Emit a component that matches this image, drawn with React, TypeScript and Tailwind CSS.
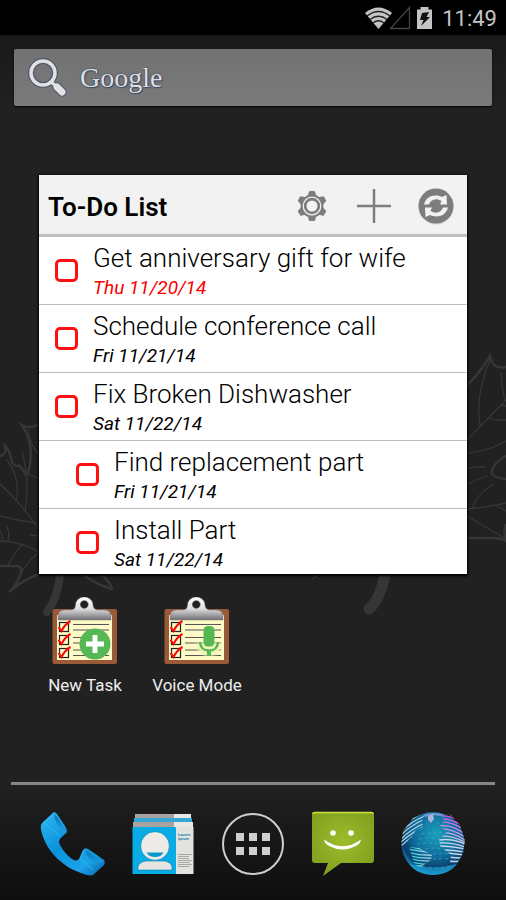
import React from "react";

type Task = { id: string; title: string; due: string; overdue?: boolean; child?: boolean };

const tasks: Task[] = [
  { id: "gift", title: "Get anniversary gift for wife", due: "Thu 11/20/14", overdue: true },
  { id: "call", title: "Schedule conference call", due: "Fri 11/21/14" },
  { id: "dish", title: "Fix Broken Dishwasher", due: "Sat 11/22/14" },
  { id: "part", title: "Find replacement part", due: "Fri 11/21/14", child: true },
  { id: "install", title: "Install Part", due: "Sat 11/22/14", child: true },
];

function Wallpaper() {
  return (
    <svg className="absolute inset-0 h-full w-full" viewBox="0 0 506 900" preserveAspectRatio="xMidYMid slice" fill="none" stroke="#363636" strokeLinecap="round" aria-hidden="true">
      <g strokeWidth="2.500">
        <path d="M40 423Q32 430 22 425Q36 447 28 473C26 477 24 471 20 466C17 465 15 468 12 462C10 456 11 452 5 446Q7 455 0 456" />
        <path d="M0 566H17C23 567 22 573 18 580Q14 588 9 592Q22 580 40 574" />
        <path d="M82 574Q97 585 112 589Q110 582 100 573" />
        <path d="M467 385Q480 373 490 356Q493 370 506 367" />
        <path d="M506 456C495 462 488 472 494 476Q500 479 506 479" />
        <path d="M467 538H492Q504 539 506 541M506 525Q503 533 506 538" />
      </g>
      <g strokeWidth="1.300">
        <path d="M0 484Q20 502 39 529M7 460Q21 478 16 501M22 452Q30 480 25 511M28 474Q32 476 39 478M0 516Q20 521 36 523M0 530Q3 535 2 541M0 541Q20 541 39 552M8 542Q10 530 6 526M30 535L39 536M22 545Q12 556 8 566M39 552Q22 566 14 588M28 430Q30 445 39 455" />
        <path d="M490 360Q475 395 480 425M501 373Q502 390 505 400M467 440L506 400M488 418Q498 421 506 420M501 405L506 406M467 453Q490 451 506 441M467 469Q475 466 485 467M467 485Q475 480 487 476M493 484Q475 497 473 507M467 509Q490 507 506 503M495 505Q500 507 506 511M467 516L504 538" />
      </g>
      <path d="M60 574Q58 598 47 612" strokeWidth="8" />
      <path d="M385 574Q380 600 369 609" strokeWidth="11" />
      <path d="M311 580L316 574H322Z" fill="#363636" stroke="none" />
    </svg>
  );
}

function StatusBar() {
  return (
    <header className="relative flex h-[35px] items-center justify-end bg-black pr-[9px] text-[#c4c4c4]">
      <svg width="70" height="24" viewBox="0 0 70 24" className="mr-[8px]" aria-label="Wi-Fi, no signal, charging" role="img">
        <path d="M1 7Q14.500 -4 28 7L14.500 23Z" fill="#c4c4c4" />
        <path d="M3 10Q14.500 1 26 10M6 13.500Q14.500 7 23 13.500M9 17Q14.500 12.500 20 17" fill="none" stroke="#222" strokeWidth="1.400" />
        <path d="M26.500 22.500H45.500V1.500Z" fill="none" stroke="#444" strokeWidth="1.300" />
        <path d="M53 3.500H56.500V1H64.500V3.500H68V23H53Z" fill="#c4c4c4" />
        <path d="M58 7L65 6L62.500 11H66L57 20L59.500 14H56Z" fill="#111" />
      </svg>
      <time className="pt-[2px] text-[22px] leading-[32px]">11:49</time>
    </header>
  );
}

function SearchIcon() {
  return (
    <svg width="40" height="40" viewBox="0 0 40 40" fill="none" strokeLinecap="round" aria-hidden="true">
      <g stroke="#4f5870">
        <circle cx="15" cy="15" r="12" strokeWidth="6" />
        <path d="M23 24L26 27" strokeWidth="5" />
        <path d="M29 29L34 34" strokeWidth="9.500" />
      </g>
      <g stroke="#e2e2e2">
        <circle cx="15" cy="15" r="12" strokeWidth="3.500" />
        <path d="M23 24L28 28" strokeWidth="3" />
        <path d="M29 29L34 34" strokeWidth="7" />
      </g>
    </svg>
  );
}

const gearTeeth = [0, 60, 120, 180, 240, 300];

function GearIcon() {
  return (
    <svg width="32" height="32" viewBox="0 0 32 32" fill="#7d7d7d" aria-hidden="true">
      {gearTeeth.map((a) => (
        <path key={a} d="M11.500 7L13 1.500Q13.200 1 14 1H18Q18.800 1 19 1.500L20.500 7Z" transform={`rotate(${a} 16 16)`} />
      ))}
      <circle cx="16" cy="16" r="11.500" />
      <circle cx="16" cy="16" r="8.800" fill="none" stroke="#f2f2f2" strokeWidth="1.200" />
      <circle cx="16" cy="16" r="5.500" fill="#f2f2f2" />
    </svg>
  );
}

function PlusIcon() {
  return (
    <svg width="34" height="34" viewBox="0 0 34 34" fill="none" stroke="#7d7d7d" strokeWidth="2.500" aria-hidden="true">
      <path d="M17 0V34M0 17H34" />
    </svg>
  );
}

function SyncIcon() {
  return (
    <svg width="38" height="38" viewBox="0 0 38 38" aria-hidden="true">
      <circle cx="19" cy="20" r="17.500" fill="#cfcfcf" />
      <circle cx="19" cy="19" r="17.500" fill="#7d7d7d" />
      <path d="M7 17.500C9 9.500 17 6.500 25 10L29.500 8L30 17.500H23L24.500 14C18.500 10.500 13.500 13 12 17.500Z" fill="#f2f2f2" />
      <path d="M31 20.500C29 28.500 21 31.500 13 28L8.500 30L8 20.500H15L13.500 24C19.500 27.500 24.500 25 26 20.500Z" fill="#f2f2f2" />
    </svg>
  );
}

function TaskRow({ task }: { task: Task }) {
  return (
    <li className="border-b border-[#bdbdbd] last:border-b-0">
      <label htmlFor={task.id} className={`flex h-[67px] items-center pl-4 ${task.child ? "ml-[21px]" : ""}`}>
        <input
          id={task.id}
          type="checkbox"
          className="size-[23px] shrink-0 appearance-none rounded-[5px] border-[3px] border-[#ff1010] bg-white checked:bg-[#ff1010]"
        />
        <span className="ml-[15px] flex flex-col pt-[2px] text-black">
          <span className="text-[26px] leading-[32px] font-[350]">{task.title}</span>
          <span className={`text-[19px] leading-[28px] italic ${task.overdue ? "text-[#fa0000]" : ""}`}>{task.due}</span>
        </span>
      </label>
    </li>
  );
}

function TodoWidget() {
  return (
    <section aria-label="To-Do List" className="mx-[39px] mt-[69px] h-[399px] overflow-hidden bg-white shadow-[0_1px_2px_1px_#000]">
      <div className="flex h-[62px] items-center border-b-[3px] border-[#c0c0c0] bg-[#f2f2f2] pl-[9px]">
        <h1 className="mt-1 flex-1 text-[26px] leading-[32px] font-semibold text-black">To-Do List</h1>
        <button aria-label="Settings" className="flex h-full w-[62px] items-center justify-center pt-[2px]"><GearIcon /></button>
        <button aria-label="Add task" className="flex h-full w-[62px] items-center justify-center pt-[2px]"><PlusIcon /></button>
        <button aria-label="Sync" className="flex h-full w-[62px] items-center justify-center pt-[2px]"><SyncIcon /></button>
      </div>
      <ul>
        {tasks.map((t) => (
          <TaskRow key={t.id} task={t} />
        ))}
      </ul>
    </section>
  );
}

function Clipboard({ kind }: { kind: "add" | "voice" }) {
  const clip = `clip-metal-${kind}`;
  const glow = `glow-${kind}`;
  return (
    <svg width="66" height="68" viewBox="0 0 66 68" aria-hidden="true">
      <defs>
        <linearGradient id={clip} x1="0" y1="0" x2="0" y2="1">
          <stop offset="0" stopColor="#fff" />
          <stop offset="0.500" stopColor="#e0e0e0" />
          <stop offset="1" stopColor="#707075" />
        </linearGradient>
        <filter id={glow} x="-50%" y="-50%" width="200%" height="200%"><feGaussianBlur stdDeviation="1.500" /></filter>
      </defs>
      <rect x="0.500" y="12" width="64.500" height="55" rx="2" fill="#9a5a38" />
      <rect x="5" y="18" width="55" height="45" fill="#fffbc8" />
      <path d="M21 27.500H57M21 33H57M21 40.500H57M21 46H57M21 53H57M21 58.500H57" stroke="#555" strokeWidth="1.200" />
      {[25, 38, 51].map((y) => (
        <g key={y} fill="none">
          <rect x="7.500" y={y + 0.5} width="9" height="9" stroke="#222" strokeWidth="1.200" />
          <path d={`M6.500 ${y + 5}L9.500 ${y + 9}Q13 ${y + 2} 18.500 ${y - 1}`} stroke="#fa0808" strokeWidth="2" />
        </g>
      ))}
      <path fillRule="evenodd" d="M6 23V18Q7 13 13 13H20Q23.500 12 23.500 8A8.700 8 0 0 1 41 8Q41 12 45 13H52Q58 13 59 18V23ZM32.200 3.500A4 4 0 1 0 32.300 3.500Z" fill={`url(#${clip})`} stroke="#77777c" strokeWidth="0.500" />
      {kind === "add" ? (
        <g>
          <circle cx="43" cy="47" r="15.500" fill="#55b855" />
          <path d="M43 38V56M34 47H52" stroke="#fff" strokeWidth="5" />
        </g>
      ) : (
        <g>
          <g filter={`url(#${glow})`} fill="none" stroke="#f0f4b4" strokeWidth="8"><path d="M45 30V59M36 46Q37 54 45 55Q53 54 54 46" /></g>
          <rect x="39.500" y="29" width="11" height="20.500" rx="4.500" fill="#55b855" />
          <path d="M36 45Q36.500 53.500 45 53.500Q53.500 53.500 54 45" fill="none" stroke="#55b855" strokeWidth="2.400" />
          <path d="M45 53V59" stroke="#55b855" strokeWidth="4" />
        </g>
      )}
    </svg>
  );
}

function PhoneIcon() {
  return (
    <svg width="66" height="66" viewBox="0 0 66 66" aria-hidden="true">
      <defs>
        <linearGradient id="phone-body" x1="0" y1="0" x2="0.900" y2="1">
          <stop offset="0" stopColor="#2fb9f2" />
          <stop offset="0.450" stopColor="#0b92dc" />
          <stop offset="0.800" stopColor="#1ba4ea" />
          <stop offset="1" stopColor="#0b6db4" />
        </linearGradient>
        <linearGradient id="phone-cup" x1="0" y1="0" x2="1" y2="1">
          <stop offset="0" stopColor="#0b79bd" />
          <stop offset="1" stopColor="#1c9ce0" />
        </linearGradient>
      </defs>
      <path d="M14 1L3 11Q0 14 1 18C4 36 18 52 36 60Q50 66 53 64L63 55Q66 52 64 49L48 38Q45 36 43 39L39 48Q36 51 32 48C27 45 20 36 19 31Q19 28 23 25L27 21Q27 18 25 15L17 3Q15 1 14 1Z" fill="url(#phone-body)" />
      <path d="M15 3L26 19Q23 20 19 15Q13 8 15 3Z" fill="url(#phone-cup)" />
      <path d="M46 39L63 50Q59 53 53 50Q45 46 46 39Z" fill="url(#phone-cup)" />
      <path d="M14 2L4 12Q9 16 20 25" fill="none" stroke="#3cc4f8" strokeWidth="1.200" opacity="0.500" />
      <path d="M44 39L40 48Q47 52 53 59" fill="none" stroke="#3cc4f8" strokeWidth="1.200" opacity="0.500" />
    </svg>
  );
}

function ContactsIcon() {
  return (
    <svg width="62" height="64" viewBox="0 0 62 64" aria-hidden="true">
      <path d="M3 2H42V6H3ZM1 10H42V15H1Z" fill="#aaa29f" />
      <path d="M42 2H59V6H42ZM42 10H61V15H42Z" fill="#e8e8e6" />
      <path d="M2 6H60V10H2Z" fill="#35a7d4" />
      <rect x="0.500" y="15" width="43.500" height="47" fill="#08abe4" />
      <rect x="44" y="15" width="17.500" height="47" fill="#e2e2df" />
      <path d="M6 58V55Q7 50 14 49H32Q39 50 40 55V58Z" fill="#e6e5e1" stroke="#0786b4" strokeWidth="0.600" />
      <circle cx="23" cy="34" r="14.300" fill="#ecebe7" stroke="#0786b4" strokeWidth="0.600" />
      <path d="M14.500 40.500H31.500Q29 45 23 45Q17 45 14.500 40.500Z" fill="#0899cc" />
      <g fontFamily="Roboto, sans-serif" fontSize="4" fontWeight="700" fill="#2b86b8">
        <text x="46" y="24">Lauren</text>
        <text x="46" y="28">ipsum</text>
      </g>
      <path d="M46 42.500H60M46 44.500H57M46 46.500H57M46 48.500H60M46 50.500H58M46 52.500H60M46 54.500H57" stroke="#999" strokeWidth="0.800" />
    </svg>
  );
}

function AppsIcon() {
  return (
    <span className="flex size-[62px] items-center justify-center rounded-full border-[2px] border-[#cfcfcf]">
      <span className="grid grid-cols-3 gap-x-[5px] gap-y-[6px]">
        {[0, 1, 2, 3, 4, 5].map((i) => (
          <span key={i} className="size-[8px] bg-[#cfcfcf]" />
        ))}
      </span>
    </span>
  );
}

function MessageIcon() {
  return (
    <svg width="64" height="66" viewBox="0 0 64 66" aria-hidden="true">
      <defs>
        <radialGradient id="msg-body" cx="0.500" cy="0.450" r="0.700">
          <stop offset="0" stopColor="#9cbc2c" />
          <stop offset="1" stopColor="#7d9c1c" />
        </radialGradient>
      </defs>
      <path d="M4 1H60Q63 1 63 4V49Q63 52 60 52H30L12 65L17 52H4Q1 52 1 49V4Q1 1 4 1Z" fill="url(#msg-body)" />
      <path d="M2 3Q2 1.500 4 1.500H60Q62 1.500 62 3" fill="none" stroke="#cfe43a" strokeWidth="1.500" />
      <circle cx="22" cy="22" r="2.800" fill="#fff" />
      <circle cx="40" cy="22" r="2.800" fill="#fff" />
      <path d="M13 28.500Q31.500 42 50 28.500Q49 33 45 35Q31.500 42 18 35Q14 33 13 28.500Z" fill="#fff" />
    </svg>
  );
}

function GlobeIcon() {
  return (
    <svg width="64" height="66" viewBox="0 0 64 66" aria-hidden="true">
      <defs>
        <radialGradient id="sea" cx="0.550" cy="0.350" r="0.650">
          <stop offset="0" stopColor="#1ba0b8" />
          <stop offset="0.550" stopColor="#0f6c9c" />
          <stop offset="0.850" stopColor="#0b3f6b" />
          <stop offset="1" stopColor="#1b94cc" />
        </radialGradient>
        <linearGradient id="east" gradientUnits="userSpaceOnUse" x1="46" y1="50" x2="58" y2="6">
          <stop offset="0.450" stopColor="#c4d4ea" />
          <stop offset="0.700" stopColor="#d08be8" />
          <stop offset="1" stopColor="#d848e8" />
        </linearGradient>
        <linearGradient id="south" gradientUnits="userSpaceOnUse" x1="10" y1="50" x2="28" y2="44">
          <stop offset="0" stopColor="#1fd0d8" />
          <stop offset="1" stopColor="#c4dcea" />
        </linearGradient>
        <clipPath id="north-west"><path d="M2 20L12 7L24 2L21 10L22 16L15 19L11 26L8 28L3 36L0 34Z" /></clipPath>
        <clipPath id="south-west"><path d="M8 36L18 37L31 44L30 49L24 53L19 58L13 52Z" /></clipPath>
        <clipPath id="east-land"><path d="M39 3L50 4L59 14L64 30L61 44L55 54L49 53L50 44L39 35L38 28L46 21L39 15L43 10Z" /></clipPath>
      </defs>
      <circle cx="32" cy="32.500" r="31.500" fill="url(#sea)" />
      <path d="M8 53Q32 60 56 53Q48 64 32 64Q16 64 8 53Z" fill="#1c9fd6" opacity="0.700" />
      <path d="M22 4Q32 0 44 4L40 5Q32 3 24 6Z" fill="#8fa8dc" opacity="0.800" />
      <path d="M27 5L32 3L33 8L30 12L27 9Z" fill="#a9b4d8" />
      <path d="M20 23Q36 20 46 22M18 28Q34 26 38 27M16 33Q32 31 36 33M24 38Q34 36 42 38M32 43Q38 42 48 43M32 48Q40 47 48 48M22 56Q36 58 50 55M35 12H41M25 13H29" fill="none" stroke="#3ea4d0" strokeWidth="1.200" strokeDasharray="3 3" opacity="0.600" />
      <g clipPath="url(#north-west)" stroke="#b4d4e4" strokeWidth="1.200" fill="none">
        <path d="M0 17Q10 7 26 0M0 21Q10 10 26 4M0 24Q10 14 26 7M0 28Q10 18 26 11M0 31Q10 22 26 14M0 35Q10 25 26 18" />
      </g>
      <g clipPath="url(#south-west)" stroke="url(#south)" strokeWidth="1.300" fill="none">
        <path d="M6 35L24 39M6 38L32 42M6 41Q20 45 32 44M6 44Q20 48 32 47M8 47Q20 51 32 50M8 50Q20 54 30 53M10 54L30 56" />
      </g>
      <g clipPath="url(#east-land)" stroke="url(#east)" strokeWidth="1.400" fill="none">
        <path d="M38 2Q48 1 58 8M38 5Q50 4 60 11M38 8Q50 7 62 15M38 11Q50 10 64 19M38 15Q50 13 64 23M38 18Q50 17 64 26M38 22Q50 20 64 29M38 25Q50 24 64 31M38 29Q50 27 64 33M38 32Q50 31 64 36M38 35Q50 35 64 38M42 39Q52 39 64 41M46 42Q54 43 64 44M46 46Q54 47 64 47M46 50Q54 51 64 50" />
      </g>
    </svg>
  );
}

const dock = [
  { name: "Phone", icon: <PhoneIcon /> },
  { name: "People", icon: <ContactsIcon /> },
  { name: "Apps", icon: <AppsIcon /> },
  { name: "Messaging", icon: <MessageIcon /> },
  { name: "Browser", icon: <GlobeIcon /> },
];

export default function App() {
  return (
    <div className="relative flex min-h-screen flex-col overflow-hidden bg-linear-to-b from-[#151515] via-[#212121] via-12% to-[#212121] font-[Roboto,'Noto_Sans',sans-serif]">
      <Wallpaper />
      <StatusBar />
      <main className="relative flex flex-1 flex-col">
        <button aria-label="Google search" className="mx-[14px] mt-[14px] flex h-[57px] items-center rounded-[2px] bg-linear-to-b from-[#727272] to-[#7a7a7a] pl-[14px] shadow-[0_1px_2px_#000]">
          <SearchIcon />
          <span className="ml-[12px] font-['Liberation_Serif',serif] text-[28px] leading-[32px] text-[#dedede] [text-shadow:0_0_2px_#3f4a68,0_0_1px_#3f4a68,1px_1px_1px_#3f4a68]">Google</span>
        </button>
        <TodoWidget />
        <div className="mt-[23px] grid grid-cols-4 px-[29px]">
          <button className="flex flex-col items-center text-[17px] leading-[24px] whitespace-nowrap text-[#eee]">
            <Clipboard kind="add" />
            <span className="mt-[8px]">New Task</span>
          </button>
          <button className="flex flex-col items-center text-[17px] leading-[24px] whitespace-nowrap text-[#eee]">
            <Clipboard kind="voice" />
            <span className="mt-[8px]">Voice Mode</span>
          </button>
        </div>
      </main>
      <nav aria-label="Dock" className="relative bg-linear-to-b from-[#212121] to-[#0e0e0e]">
        <div className="mx-[11px] h-[3px] bg-[#868686]" />
        <div className="grid h-[115px] grid-cols-5 items-center px-7 pt-[2px]">
          {dock.map((d) => (
            <button key={d.name} aria-label={d.name} className="flex items-center justify-center">{d.icon}</button>
          ))}
        </div>
      </nav>
    </div>
  );
}
